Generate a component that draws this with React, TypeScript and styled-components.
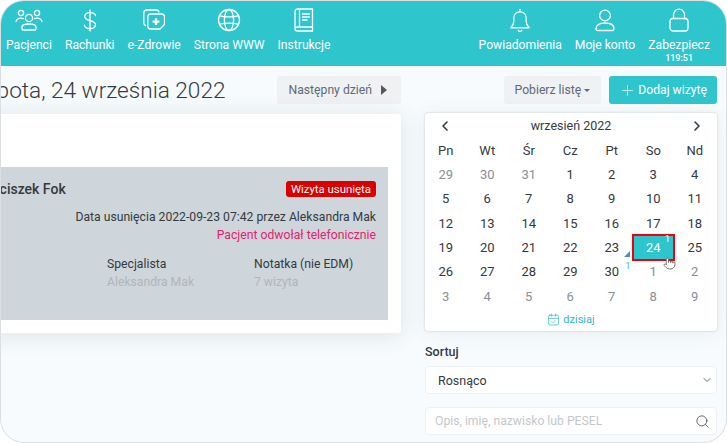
import React from 'react';
import styled, { createGlobalStyle } from 'styled-components';
import { ChevronLeft, ChevronRight, ChevronDown, Search, Plus, Pointer, CalendarCheck } from 'lucide-react';

const GlobalStyle = createGlobalStyle`
  html, body { margin: 0; padding: 0; background: #fff; }
  * { box-sizing: border-box; }
  body { font-family: Roboto, "Liberation Sans", sans-serif; color: #343a40; }
`;

const Frame = styled.div`
  width: 727px;
  height: 443px;
  border: 1px solid #dcdfe2;
  border-radius: 24px;
  overflow: hidden;
  background: #f7fbfd;
  position: relative;
`;

const Header = styled.header`
  height: 65px;
  background: #2fc5cd;
  display: flex;
  justify-content: space-between;
  padding-right: 16px;
`;

const NavGroup = styled.nav`
  display: flex;
  gap: 13px;
  padding-left: 5px;
`;

const NavItem = styled.a`
  display: flex;
  flex-direction: column;
  align-items: center;
  color: #fff;
  font-size: 12.15px;
  line-height: 15px;
  white-space: nowrap;
  padding-top: 7px;

  svg {
    display: block;
    height: 25px;
    margin-bottom: 5px;
  }
`;

const Timer = styled.small`
  font-size: 9px;
  font-weight: 500;
  line-height: 10px;
`;

const Toolbar = styled.div`
  display: flex;
  height: 48px;
  padding-top: 10px;
  align-items: flex-start;
  gap: 24px;
`;

const ToolbarLeft = styled.div`
  width: 400px;
  display: flex;
  justify-content: flex-end;
  gap: 52px;
`;

const Title = styled.h1`
  flex-shrink: 0;
  margin: 0;
  font-size: 22.6px;
  line-height: 29px;
  font-weight: 300;
  color: #343a40;
  white-space: nowrap;
`;

const ToolbarRight = styled.div`
  width: 292px;
  display: flex;
  justify-content: flex-end;
  gap: 8px;
`;

const Button = styled.button<{ $primary?: boolean }>`
  height: 28px;
  border: 0;
  border-radius: 3px;
  padding: 0 ${(p) => (p.$primary ? '10px' : '11px')};
  display: inline-flex;
  align-items: center;
  gap: ${(p) => (p.$primary ? '2px' : '5px')};
  flex-shrink: 0;
  font-family: inherit;
  font-size: 12.2px;
  background: ${(p) => (p.$primary ? '#2fc5cd' : '#f0f1f3')};
  color: ${(p) => (p.$primary ? '#fff' : '#5f6a78')};
`;

const Caret = styled.span<{ $dir: 'right' | 'down' }>`
  width: 0;
  height: 0;
  ${(p) =>
    p.$dir === 'right'
      ? 'border-left: 6px solid #4f5966; border-top: 5px solid transparent; border-bottom: 5px solid transparent; margin: 0 3px 0 4px;'
      : 'border-top: 3px solid #5f6a78; border-left: 3px solid transparent; border-right: 3px solid transparent; margin-left: -2px;'}
`;

const Body = styled.div`
  display: flex;
  gap: 24px;
  align-items: flex-start;
`;

const LeftColumn = styled.div`
  width: 400px;
  display: flex;
  justify-content: flex-end;
`;

const VisitCard = styled.section`
  width: 460px;
  height: 219px;
  flex-shrink: 0;
  background: #fff;
  border-radius: 3px;
  box-shadow: 0 2px 22px rgba(60, 75, 90, 0.14);
  padding: 53px 13px 13px 0;
`;

const VisitPanel = styled.div`
  height: 153px;
  background: #ced6db;
  padding: 13px 12px 0 31px;
`;

const VisitTop = styled.div`
  display: flex;
  justify-content: space-between;
  align-items: center;
`;

const PatientName = styled.div`
  padding-top: 1px;
  font-size: 14px;
  font-weight: 500;
  color: #343a40;
`;

const Badge = styled.span`
  background: #d90000;
  color: #fff;
  border-radius: 3px;
  font-size: 11.4px;
  line-height: 16px;
  padding: 0 5px;
`;

const RightLine = styled.div<{ $pink?: boolean }>`
  font-size: 12.2px;
  line-height: 17.5px;
  text-align: right;
  color: ${(p) => (p.$pink ? '#e8216f' : '#343a40')};
`;

const Lines = styled.div`
  margin-top: 12px;
`;

const Fields = styled.div`
  margin-top: 12px;
  display: flex;
  justify-content: flex-end;
  padding-right: 23px;
`;

const Field = styled.div<{ $width: number }>`
  width: ${(p) => p.$width}px;
  font-size: 12.2px;
  line-height: 17.5px;
  white-space: nowrap;
`;

const FieldValue = styled.div`
  color: #b0b5b9;
`;

const RightColumn = styled.aside`
  width: 292px;
  margin-top: -1px;
`;

const Calendar = styled.section`
  height: 218px;
  width: 292px;
  background: #fff;
  border-radius: 3px;
  box-shadow: 0 0 2px rgba(60, 75, 90, 0.3), 0 2px 20px rgba(60, 75, 90, 0.08);
  position: relative;
`;

const CalendarHead = styled.div`
  height: 25px;
  display: flex;
  align-items: center;
  justify-content: space-between;
  padding: 0 12px;
  font-size: 12.5px;
  color: #343a40;
`;

const DaysGrid = styled.div`
  display: grid;
  grid-template-columns: repeat(7, 41.5px);
  grid-auto-rows: 24.33px;
`;

const DayCell = styled.div<{ $muted?: boolean; $selected?: boolean }>`
  position: relative;
  display: flex;
  align-items: center;
  justify-content: center;
  font-size: 13px;
  color: ${(p) => (p.$selected ? '#fff' : p.$muted ? '#8a9097' : '#343a40')};
  ${(p) => p.$selected && 'background: #2fc5cd; outline: 2px solid #f4000a; outline-offset: -1px;'}
`;

const CellCount = styled.span`
  position: absolute;
  top: -2px;
  right: 4px;
  font-size: 9.5px;
  line-height: 12px;
  color: inherit;
`;

const OtherMonthCount = styled(CellCount)`
  top: 0;
  right: 2px;
  color: #2fc5cd;
`;

const Corner = styled.span`
  position: absolute;
  right: 3px;
  bottom: 3px;
  width: 0;
  height: 0;
  border-left: 6px solid transparent;
  border-bottom: 6px solid #4a8fcb;
`;

const TodayLink = styled.a`
  height: 22px;
  display: flex;
  align-items: center;
  justify-content: center;
  gap: 3px;
  font-size: 11px;
  color: #2fb8c2;
`;

const Cursor = styled.span`
  position: absolute;
  left: 238px;
  top: 144px;
  line-height: 0;
`;

const SortLabel = styled.label`
  display: block;
  margin-top: 13px;
  font-size: 12.5px;
  font-weight: 500;
  line-height: 15px;
`;

const SelectBox = styled.div`
  margin-top: 7px;
  height: 28px;
  background: #fff;
  border: 1px solid #eef1f4;
  border-radius: 4px;
  display: flex;
  align-items: center;
  justify-content: space-between;
  padding: 0 3px 0 12px;
  font-size: 12.5px;
  color: #343a40;
`;

const SearchBox = styled.div`
  margin-top: 13px;
  height: 28px;
  background: #fff;
  border: 1px solid #eef1f4;
  border-radius: 4px;
  display: flex;
  align-items: center;
  justify-content: space-between;
  padding: 0 6px 0 9px;
  font-size: 12.2px;
  color: #c4c8cc;
`;

const Icon = ({ width = 28, children }: { width?: number; children: React.ReactNode }) => (
  <svg width={width} height={25} viewBox={`0 0 ${width} 25`} fill="none" stroke="#fff" strokeWidth="1.3" strokeLinecap="round" strokeLinejoin="round">
    {children}
  </svg>
);

const navLeft = [
  {
    label: 'Pacjenci',
    icon: (
      <Icon>
        <circle cx="14" cy="10" r="3.6" />
        <path d="M7 21v-2c0-1.800 2.300-3 7-3s7 1.200 7 3v2c0 .6-.4 1-1 1H8c-.6 0-1-.4-1-1z" />
        <circle cx="6" cy="5" r="2.600" />
        <circle cx="22" cy="5" r="2.600" />
        <path d="M1 13.500c.6-2 2.600-3.400 5-3.400 1 0 1.800.2 2.500.5M27 13.500c-.6-2-2.600-3.400-5-3.400-1 0-1.800.2-2.500.5" />
      </Icon>
    ),
  },
  {
    label: 'Rachunki',
    icon: (
      <Icon width={16}>
        <path d="M8 2v21" />
        <path d="M13.500 7.500C13 5.500 10.800 4.600 8 4.600c-3 0-5.300 1.400-5.300 3.800 0 5.600 10.800 2.800 10.800 8.400 0 2.500-2.300 3.800-5.500 3.800-3 0-5.200-1.200-5.600-3.500" />
      </Icon>
    ),
  },
  {
    label: 'e-Zdrowie',
    icon: (
      <Icon width={22}>
        <path d="M2.500 17.500C1.300 17.200.800 16.200.800 15V5C.800 3.300 2.100 2 3.800 2h9.500c1.200 0 2.200.7 2.600 1.800" />
        <path d="M7.800 6h10.700c1.700 0 3 1.300 3 3v7.500l-4.500 4.500H7.800c-1.700 0-3-1.300-3-3V9c0-1.700 1.300-3 3-3z" />
        <path d="M13 10.300v6.800M9.600 13.700h6.800" strokeWidth="2.200" strokeLinecap="butt" />
      </Icon>
    ),
  },
  {
    label: 'Strona WWW',
    icon: (
      <Icon width={24}>
        <circle cx="12" cy="12" r="10.500" />
        <ellipse cx="12" cy="12" rx="4.600" ry="10.500" />
        <path d="M2.800 7.800c5.500 1.400 12.900 1.400 18.400 0M2.800 16.200c5.500-1.400 12.900-1.400 18.400 0" />
      </Icon>
    ),
  },
  {
    label: 'Instrukcje',
    icon: (
      <Icon width={20}>
        <path d="M1 20V4C1 2.300 2.300 1 4 1H18.500v18H3.500C2.100 19 1 20.100 1 21.200S2.100 23 3.500 23H18.500" />
        <path d="M18.500 19v4" />
        <path d="M5.500 1v18M8.500 6h7M8.500 9h7M8.500 12h4.500" />
      </Icon>
    ),
  },
];

const navRight = [
  {
    label: 'Powiadomienia',
    icon: (
      <Icon width={22}>
        <path d="M11 1.500v2.300" />
        <path d="M11 3.800c-3.700 0-6.200 2.700-6.200 6.200v3.500c0 2.700-1 4.200-3 6.300h18.400c-2-2.100-3-3.600-3-6.300V10c0-3.500-2.500-6.200-6.200-6.200z" />
        <path d="M9.300 22.500c.4.700 1 1 1.700 1s1.300-.3 1.700-1" />
      </Icon>
    ),
  },
  {
    label: 'Moje konto',
    icon: (
      <Icon width={20}>
        <circle cx="10" cy="7.500" r="5.400" />
        <path d="M1 20.800c0-3.500 3.200-5.800 9-5.800s9 2.300 9 5.800c0 1-.6 1.700-1.500 1.700h-15C1.600 22.500 1 21.800 1 20.800z" />
      </Icon>
    ),
  },
  {
    label: 'Zabezpiecz',
    timer: '119:51',
    icon: (
      <Icon width={20}>
        <path d="M4.500 10.500V7c0-3.300 2.400-5.800 5.500-5.800s5.500 2.500 5.500 5.800v3.500" />
        <rect x="1" y="10.500" width="18" height="12.500" rx="3" />
      </Icon>
    ),
  },
];

const weekdays = ['Pn', 'Wt', 'Śr', 'Cz', 'Pt', 'So', 'Nd'];

type Day = { n: number; muted?: boolean };

const monthDays: Day[] = [
  ...[29, 30, 31].map((n) => ({ n, muted: true })),
  ...Array.from({ length: 30 }, (_, i) => ({ n: i + 1 })),
  ...Array.from({ length: 9 }, (_, i) => ({ n: i + 1, muted: true })),
];

export default function App() {
  return (
    <Frame>
      <GlobalStyle />
      <Header>
        <NavGroup>
          {navLeft.map((item) => (
            <NavItem key={item.label}>
              {item.icon}
              {item.label}
            </NavItem>
          ))}
        </NavGroup>
        <NavGroup>
          {navRight.map((item) => (
            <NavItem key={item.label}>
              {item.icon}
              {item.label}
              {item.timer && <Timer>{item.timer}</Timer>}
            </NavItem>
          ))}
        </NavGroup>
      </Header>

      <Toolbar>
        <ToolbarLeft>
          <Title>Sobota, 24 września 2022</Title>
          <Button>
            Następny dzień <Caret $dir="right" />
          </Button>
        </ToolbarLeft>
        <ToolbarRight>
          <Button>
            Pobierz listę <Caret $dir="down" />
          </Button>
          <Button $primary>
            <Plus size={17} strokeWidth={1} /> Dodaj wizytę
          </Button>
        </ToolbarRight>
      </Toolbar>

      <Body>
        <LeftColumn>
          <VisitCard>
            <VisitPanel>
              <VisitTop>
                <PatientName>Franciszek Fok</PatientName>
                <Badge>Wizyta usunięta</Badge>
              </VisitTop>
              <Lines>
                <RightLine>Data usunięcia 2022-09-23 07:42 przez Aleksandra Mak</RightLine>
                <RightLine $pink>Pacjent odwołał telefonicznie</RightLine>
              </Lines>
              <Fields>
                <Field $width={147}>
                  Specjalista
                  <FieldValue>Aleksandra Mak</FieldValue>
                </Field>
                <Field $width={99}>
                  Notatka (nie EDM)
                  <FieldValue>7 wizyta</FieldValue>
                </Field>
              </Fields>
            </VisitPanel>
          </VisitCard>
        </LeftColumn>

        <RightColumn>
          <Calendar>
            <CalendarHead>
              <ChevronLeft size={16} strokeWidth={2.4} />
              wrzesień 2022
              <ChevronRight size={16} strokeWidth={2.4} />
            </CalendarHead>
            <DaysGrid>
              {weekdays.map((d) => (
                <DayCell key={d}>{d}</DayCell>
              ))}
              {monthDays.map((d, i) => {
                const selected = !d.muted && d.n === 24;
                return (
                  <DayCell key={i} $muted={d.muted} $selected={selected}>
                    {d.n}
                    {selected && <CellCount>1</CellCount>}
                    {!d.muted && d.n === 23 && <Corner />}
                    {!d.muted && d.n === 30 && <OtherMonthCount>1</OtherMonthCount>}
                  </DayCell>
                );
              })}
            </DaysGrid>
            <TodayLink>
              <CalendarCheck size={13} strokeWidth={1.3} /> dzisiaj
            </TodayLink>
            <Cursor>
              <Pointer size={13} fill="#fff" stroke="#555" strokeWidth={1.4} />
            </Cursor>
          </Calendar>

          <SortLabel>Sortuj</SortLabel>
          <SelectBox>
            Rosnąco
            <ChevronDown size={12} strokeWidth={1.5} />
          </SelectBox>
          <SearchBox>
            Opis, imię, nazwisko lub PESEL
            <Search size={15} strokeWidth={1.2} color="#343a40" />
          </SearchBox>
        </RightColumn>
      </Body>
    </Frame>
  );
}
